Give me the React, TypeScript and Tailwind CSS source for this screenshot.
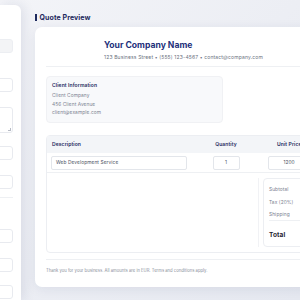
import React from "react";

export default function App() {
  const font = { fontFamily: "Inter, 'Noto Sans', sans-serif" };
  return (
    <div
      className="w-[300px] h-[300px] overflow-hidden bg-gradient-to-br from-[#f3f4f8] to-[#e5e8f0] flex"
      style={font}
    >
      <aside className="w-[21px] shrink-0 mt-[5px] bg-white rounded-tr-[6px] overflow-hidden shadow-[3px_0_12px_rgba(30,41,90,0.10)]">
        <div className="w-[33px] -ml-[20px] flex flex-col">
          <div className="mt-[34px] h-[14px] rounded-[3px] bg-[#f3f4f6] border border-[#eceef2]" />
          <div className="mt-[25px] h-[14px] rounded-[3px] border border-[#e8eaef]" />
          <div className="mt-[15px] h-[26px] rounded-[3px] border border-[#e8eaef] relative">
            <span className="absolute right-[1px] bottom-[1px] w-[3px] h-[3px] border-r border-b border-[#b8bcc6]" />
          </div>
          <div className="mt-[13px] h-[14px] rounded-[3px] border border-[#e8eaef]" />
          <div className="mt-[15px] h-[14px] rounded-[3px] border border-[#e8eaef]" />
          <div className="mt-[8px] h-px bg-[#eef0f3]" />
          <div className="mt-[31px] h-[14px] rounded-[3px] border border-[#e8eaef]" />
          <div className="mt-[15px] h-[14px] rounded-[3px] border border-[#e8eaef]" />
          <div className="mt-[13px] h-[14px] rounded-[3px] border border-[#e8eaef]" />
        </div>
      </aside>

      <main className="ml-[14px] flex flex-col w-[300px] shrink-0">
        <h2 className="mt-[13px] h-[9px] flex items-center gap-[3px] text-[7px] font-bold text-[#1e2a5e] leading-none tracking-[0.1px]">
          <span className="w-[1.5px] h-[7px] bg-[#1e2a5e]" />
          Quote Preview
        </h2>
        <div className="mt-[5px] w-[300px] h-[260px] bg-white rounded-[7px] shadow-[0_2px_12px_rgba(30,41,90,0.08)] px-[11px] flex flex-col">
          <div className="h-[40px] border-b border-[#eef0f3] pl-[58px] pt-[13px]">
            <div className="text-[8.6px] font-bold text-[#23307a] leading-[10px]">Your Company Name</div>
            <div className="mt-[4px] text-[5px] tracking-[0.15px] text-[#6b7280] leading-[6px] whitespace-nowrap">
              123 Business Street • (555) 123-4567 • contact@company.com
            </div>
          </div>

          <div className="mt-[9px] w-[177px] h-[47px] rounded-[4px] bg-[#f8f9fb] border border-[#f0f1f4] pl-[5px] pt-[5px]">
            <div className="text-[5px] font-semibold text-[#1e2a5e] leading-[7px] tracking-[0.1px]">Client Information</div>
            <div className="mt-[2px] text-[4.8px] tracking-[0.1px] text-[#7b8190] leading-[8.5px]">
              <div>Client Company</div>
              <div>456 Client Avenue</div>
              <div>client@example.com</div>
            </div>
          </div>

          <div className="mt-[12px] h-[118px] border border-[#eceef2] rounded-[4px] w-[290px] flex flex-col">
            <div className="h-[17px] bg-[#f3f5f8] grid grid-cols-[152px_54px_60px] items-center text-[5px] font-semibold text-[#1e2a5e] leading-none tracking-[0.1px]">
              <div className="pl-[5px]">Description</div>
              <div className="text-center">Quantity</div>
              <div className="pl-[24px] whitespace-nowrap">Unit Price</div>
            </div>
            <div className="h-[20px] border-b border-[#eef0f3] grid grid-cols-[152px_54px_60px] items-center">
              <div className="pl-[4px]">
                <div className="w-[136px] h-[14px] border border-[#e3e6eb] rounded-[2px] flex items-center pl-[4px] text-[4.8px] tracking-[0.1px] text-[#4b5263]">
                  Web Development Service
                </div>
              </div>
              <div className="flex justify-center">
                <div className="w-[27px] h-[14px] border border-[#e3e6eb] rounded-[2px] flex items-center justify-center text-[4.8px] text-[#4b5263]">
                  1
                </div>
              </div>
              <div className="pl-[15px]">
                <div className="w-[42px] h-[14px] border border-[#e3e6eb] rounded-[2px] flex items-center justify-center text-[4.8px] text-[#4b5263]">
                  1200
                </div>
              </div>
            </div>
            <div className="flex-1 flex pl-[211px] pt-[5px] pb-[5px]">
              <div className="border-l border-[#f1f2f5] pl-[4px] flex-1">
                <div className="h-[69px] border border-[#eceef2] rounded-[4px] pl-[5px] pt-[7px] text-[4.8px] tracking-[0.1px] text-[#7b8190]">
                  <div className="leading-[6px]">Subtotal</div>
                  <div className="mt-[7px] leading-[6px]">Tax (20%)</div>
                  <div className="mt-[6px] leading-[6px]">Shipping</div>
                  <div className="mt-[3px] border-t border-[#eef0f3] pt-[11px] text-[6.5px] font-bold text-[#1f2433] leading-[7px]">Total</div>
                </div>
              </div>
            </div>
          </div>

          <div className="mt-[6px] border-t border-[#eef0f3] pt-[8px] flex justify-between text-[4.2px] text-[#8a8f9c] leading-[6px]">
            <span>Thank you for your business. All amounts are in EUR. Terms and conditions apply.</span>
            <span className="-mt-[3px] mr-[-13px]">Payment</span>
          </div>
        </div>
      </main>
    </div>
  );
}
